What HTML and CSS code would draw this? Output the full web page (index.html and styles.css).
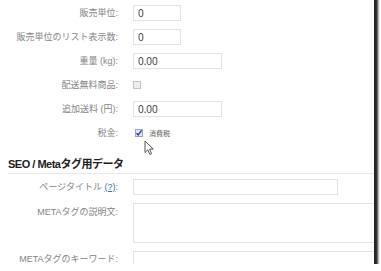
FILE: index.html
```html
<!DOCTYPE html>
<html lang="ja">
<head>
    <meta charset="UTF-8">
    <meta name="viewport" content="width=device-width, initial-scale=1.0">
    <title>商品の編集</title>
    <link rel="stylesheet" href="styles.css">
</head>
<body>
<div class="frame">
    <div class="form">
        <div class="row">
            <label class="lbl">販売単位:</label>
            <input class="inp short" type="text" value="0">
        </div>
        <div class="row">
            <label class="lbl">販売単位のリスト表示数:</label>
            <input class="inp short" type="text" value="0">
        </div>
        <div class="row">
            <label class="lbl">重量 (kg):</label>
            <input class="inp mid" type="text" value="0.00">
        </div>
        <div class="row">
            <label class="lbl">配送無料商品:</label>
            <span class="cb"></span>
        </div>
        <div class="row">
            <label class="lbl">追加送料 (円):</label>
            <input class="inp mid" type="text" value="0.00">
        </div>
        <div class="row">
            <label class="lbl">税金:</label>
            <span class="check-wrap">
                <span class="cb checked">
                    <svg width="8" height="8" viewBox="0 0 8 8"><path d="M1.5 4.2 L3.2 6 L6.6 1.4" fill="none" stroke="#2c3f8f" stroke-width="1.4"/></svg>
                </span>
                <span class="cb-text">消費税</span>
            </span>
        </div>
    </div>

    <h2 class="sect">SEO / Metaタグ用データ</h2>

    <div class="form seo">
        <div class="row">
            <label class="lbl">ページタイトル <a class="help" href="#">(?)</a>:</label>
            <input class="inp long" type="text" value="">
        </div>
        <div class="row tall">
            <label class="lbl">METAタグの説明文:</label>
            <textarea class="inp wide area"></textarea>
        </div>
        <div class="row">
            <label class="lbl">METAタグのキーワード:</label>
            <input class="inp wide" type="text" value="">
        </div>
    </div>

    <!-- マウスカーソル -->
    <svg class="cursor" width="11" height="16" viewBox="0 0 11 16">
        <path d="M1 1 L1 12.5 L3.8 9.8 L5.8 14.5 L7.6 13.7 L5.6 9.1 L9.3 9.1 Z" fill="#fff" stroke="#555" stroke-width="1" stroke-linejoin="round"/>
    </svg>
</div>
</body>
</html>
```

FILE: styles.css
```css
body {
    margin: 0;
    background: #fff;
    font-family: "Liberation Sans", "Noto Sans CJK JP", sans-serif;
}
.frame {
    position: relative;
    width: 374px;
    height: 270px;
    margin-top: -6px;
    padding-top: 11px;
    box-sizing: border-box;
    background: #fff;
    overflow: hidden;
    box-shadow: 4px 4px 2px rgba(0,0,0,0.85);
}
.form {
    display: flex;
    flex-direction: column;
    gap: 8px;
}
.row {
    display: grid;
    grid-template-columns: 118px 1fr;
    column-gap: 15px;
    align-items: center;
    height: 16px;
}
.row.tall {
    height: 40px;
    align-items: start;
}
.lbl {
    text-align: right;
    font-size: 9px;
    line-height: 16px;
    color: #858585;
    white-space: nowrap;
}
.row.tall .lbl {
    padding-top: 1px;
}
.help {
    color: #3b6fb0;
}
.inp {
    box-sizing: border-box;
    height: 16px;
    border: 1px solid #e3e3e3;
    padding: 0 4px;
    margin: 0;
    font-family: "Open Sans", sans-serif;
    font-size: 10px;
    color: #333;
    background: #fff;
    outline: none;
}
.short { width: 48px; }
.mid { width: 89px; }
.long { width: 205px; }
.wide { width: 260px; }
.area {
    height: 40px;
    resize: none;
}
.cb {
    display: inline-block;
    width: 8px;
    height: 8px;
    box-sizing: border-box;
    border: 1px solid #c4c4c4;
    background: #eee;
}
.cb.checked {
    position: relative;
    border-color: #9aa3c8;
    background: #e4e7f5;
}
.cb.checked svg {
    position: absolute;
    left: -1px;
    top: -1px;
}
.check-wrap {
    display: flex;
    align-items: center;
    gap: 6px;
    padding-left: 2px;
}
.cb-text {
    font-size: 7px;
    color: #555;
}
.sect {
    margin: 16px 0 5px 8px;
    padding-bottom: 2px;
    border-bottom: 1px solid #e8e8e8;
    font-size: 11px;
    line-height: 14px;
    letter-spacing: -0.5px;
    color: #222;
}
.cursor {
    position: absolute;
    left: 144px;
    top: 146px;
}
```
